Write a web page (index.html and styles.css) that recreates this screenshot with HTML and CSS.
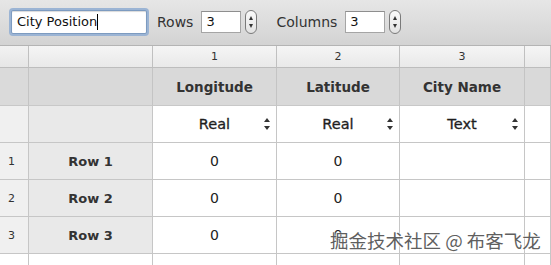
FILE: index.html
```html
<!DOCTYPE html>
<html>
<head>
<meta charset="utf-8">
<link rel="stylesheet" href="styles.css">
</head>
<body>
<div class="app">
  <div class="toolbar">
    <div class="namefield"><span class="nametext">City Position</span><span class="caret"></span></div>
    <span class="label lbl-rows">Rows</span>
    <div class="numfield">3</div>
    <div class="stepper"><span class="up"></span><span class="down"></span></div>
    <span class="label lbl-cols">Columns</span>
    <div class="numfield">3</div>
    <div class="stepper"><span class="up"></span><span class="down"></span></div>
  </div>
  <div class="grid">
    <div class="c num corner"></div>
    <div class="c num corner2"></div>
    <div class="c num">1</div>
    <div class="c num">2</div>
    <div class="c num">3</div>
    <div class="c num"></div>

    <div class="c hd rn"></div>
    <div class="c hd"></div>
    <div class="c hd">Longitude</div>
    <div class="c hd">Latitude</div>
    <div class="c hd">City Name</div>
    <div class="c hd"></div>

    <div class="c rnl"></div>
    <div class="c rl"></div>
    <div class="c ty">Real<span class="sel"></span></div>
    <div class="c ty">Real<span class="sel"></span></div>
    <div class="c ty">Text<span class="sel"></span></div>
    <div class="c w"></div>

    <div class="c rnl">1</div>
    <div class="c rl">Row 1</div>
    <div class="c w">0</div>
    <div class="c w">0</div>
    <div class="c w"></div>
    <div class="c w"></div>

    <div class="c rnl">2</div>
    <div class="c rl">Row 2</div>
    <div class="c w">0</div>
    <div class="c w">0</div>
    <div class="c w"></div>
    <div class="c w"></div>

    <div class="c rnl">3</div>
    <div class="c rl">Row 3</div>
    <div class="c w">0</div>
    <div class="c w">0</div>
    <div class="c w"></div>
    <div class="c w"></div>

    <div class="c w e"></div>
    <div class="c w e"></div>
    <div class="c w e"></div>
    <div class="c w e"></div>
    <div class="c w e"></div>
    <div class="c w e"></div>
  </div>
  <div class="watermark">掘金技术社区 @ 布客飞龙</div>
</div>
</body>
</html>
```

FILE: styles.css
```css
html, body {
  margin: 0;
  padding: 0;
  background: #ffffff;
}
.app {
  position: relative;
  width: 551px;
  height: 265px;
  overflow: hidden;
  font-family: "DejaVu Sans", "Liberation Sans", sans-serif;
  color: #222;
}
.toolbar {
  height: 46px;
  box-sizing: border-box;
  border-bottom: 1px solid #b4b4b4;
  background: linear-gradient(#e6e6e6, #d3d3d3);
  display: flex;
  align-items: center;
  padding-left: 11px;
  padding-bottom: 2px;
  font-size: 13px;
}
.namefield {
  width: 136px;
  height: 24px;
  box-sizing: border-box;
  background: #fff;
  border: 1px solid #7d9bc0;
  box-shadow: 0 0 0 2px #9bb4d4, inset 0 1px 1px rgba(0,0,0,0.15);
  border-radius: 2px;
  display: flex;
  align-items: center;
  padding-left: 5px;
  font-size: 13px;
  color: #111;
}
.caret {
  display: inline-block;
  width: 1px;
  height: 16px;
  background: #000;
}
.label {
  color: #333;
  font-size: 14px;
}
.lbl-rows { margin-left: 10px; }
.lbl-cols { margin-left: 19px; }
.numfield {
  width: 40px;
  height: 22px;
  box-sizing: border-box;
  margin-left: 8px;
  background: #fff;
  border: 1px solid #a5a5a5;
  border-top-color: #8e8e8e;
  display: flex;
  align-items: center;
  padding-left: 4px;
  font-size: 13px;
  color: #111;
}
.stepper {
  width: 12px;
  height: 24px;
  margin-left: 4px;
  box-sizing: border-box;
  border: 1px solid #7a7a7a;
  border-radius: 6px;
  background: linear-gradient(#fafafa, #e2e2e2);
  display: flex;
  flex-direction: column;
  align-items: center;
  justify-content: center;
  gap: 4px;
}
.stepper .up {
  width: 0; height: 0;
  border-left: 2.5px solid transparent;
  border-right: 2.5px solid transparent;
  border-bottom: 4px solid #333;
}
.stepper .down {
  width: 0; height: 0;
  border-left: 2.5px solid transparent;
  border-right: 2.5px solid transparent;
  border-top: 4px solid #333;
}
.grid {
  display: grid;
  grid-template-columns: 29px 124px 124px 123px 125px 26px;
  grid-template-rows: 22px 38px 37px 37px 37px 37px 12px;
}
.c {
  box-sizing: border-box;
  border-right: 1px solid #c6c6c6;
  border-bottom: 1px solid #c6c6c6;
  display: flex;
  align-items: center;
  justify-content: center;
  position: relative;
}
.num {
  background: linear-gradient(#f5f5f5, #e9e9e9);
  font-size: 11px;
  color: #333;
  border-right-color: #c0c0c0;
  border-bottom-color: #bdbdbd;
}
.corner { background: linear-gradient(#f2f2f2, #e6e6e6); }
.hd {
  background: #d9d9d9;
  font-weight: bold;
  font-size: 13.5px;
  color: #333;
  border-right-color: #c4c4c4;
  border-bottom-color: #c8c8c8;
}
.hd.rn { background: #dadada; }
.rnl {
  background: #f0f0f0;
  font-size: 11px;
  color: #333;
  justify-content: flex-start;
  padding-left: 8px;
}
.rl {
  background: #e9e9e9;
  font-weight: bold;
  font-size: 13px;
  color: #333;
}
.ty {
  background: #fff;
  font-size: 14.5px;
  font-weight: normal;
  color: #1e1e1e;
  -webkit-text-stroke: 0.3px #1e1e1e;
}
.sel {
  position: absolute;
  right: 6px;
  top: 50%;
  margin-top: -6px;
  width: 6px;
  height: 12px;
}
.sel::before, .sel::after {
  content: "";
  position: absolute;
  left: 0;
  width: 0; height: 0;
  border-left: 3px solid transparent;
  border-right: 3px solid transparent;
}
.sel::before { top: 0; border-bottom: 4px solid #333; }
.sel::after { bottom: 0; border-top: 4px solid #333; }
.w {
  background: #fff;
  font-size: 14px;
  color: #222;
}
.e { border-bottom: none; }
.watermark {
  position: absolute;
  left: 330px;
  top: 227px;
  font-family: "Noto Sans CJK SC", sans-serif;
  font-size: 18.5px;
  color: #5f5f5f;
  text-shadow: 0 0 2px #fff, 0 0 2px #fff;
}
```
